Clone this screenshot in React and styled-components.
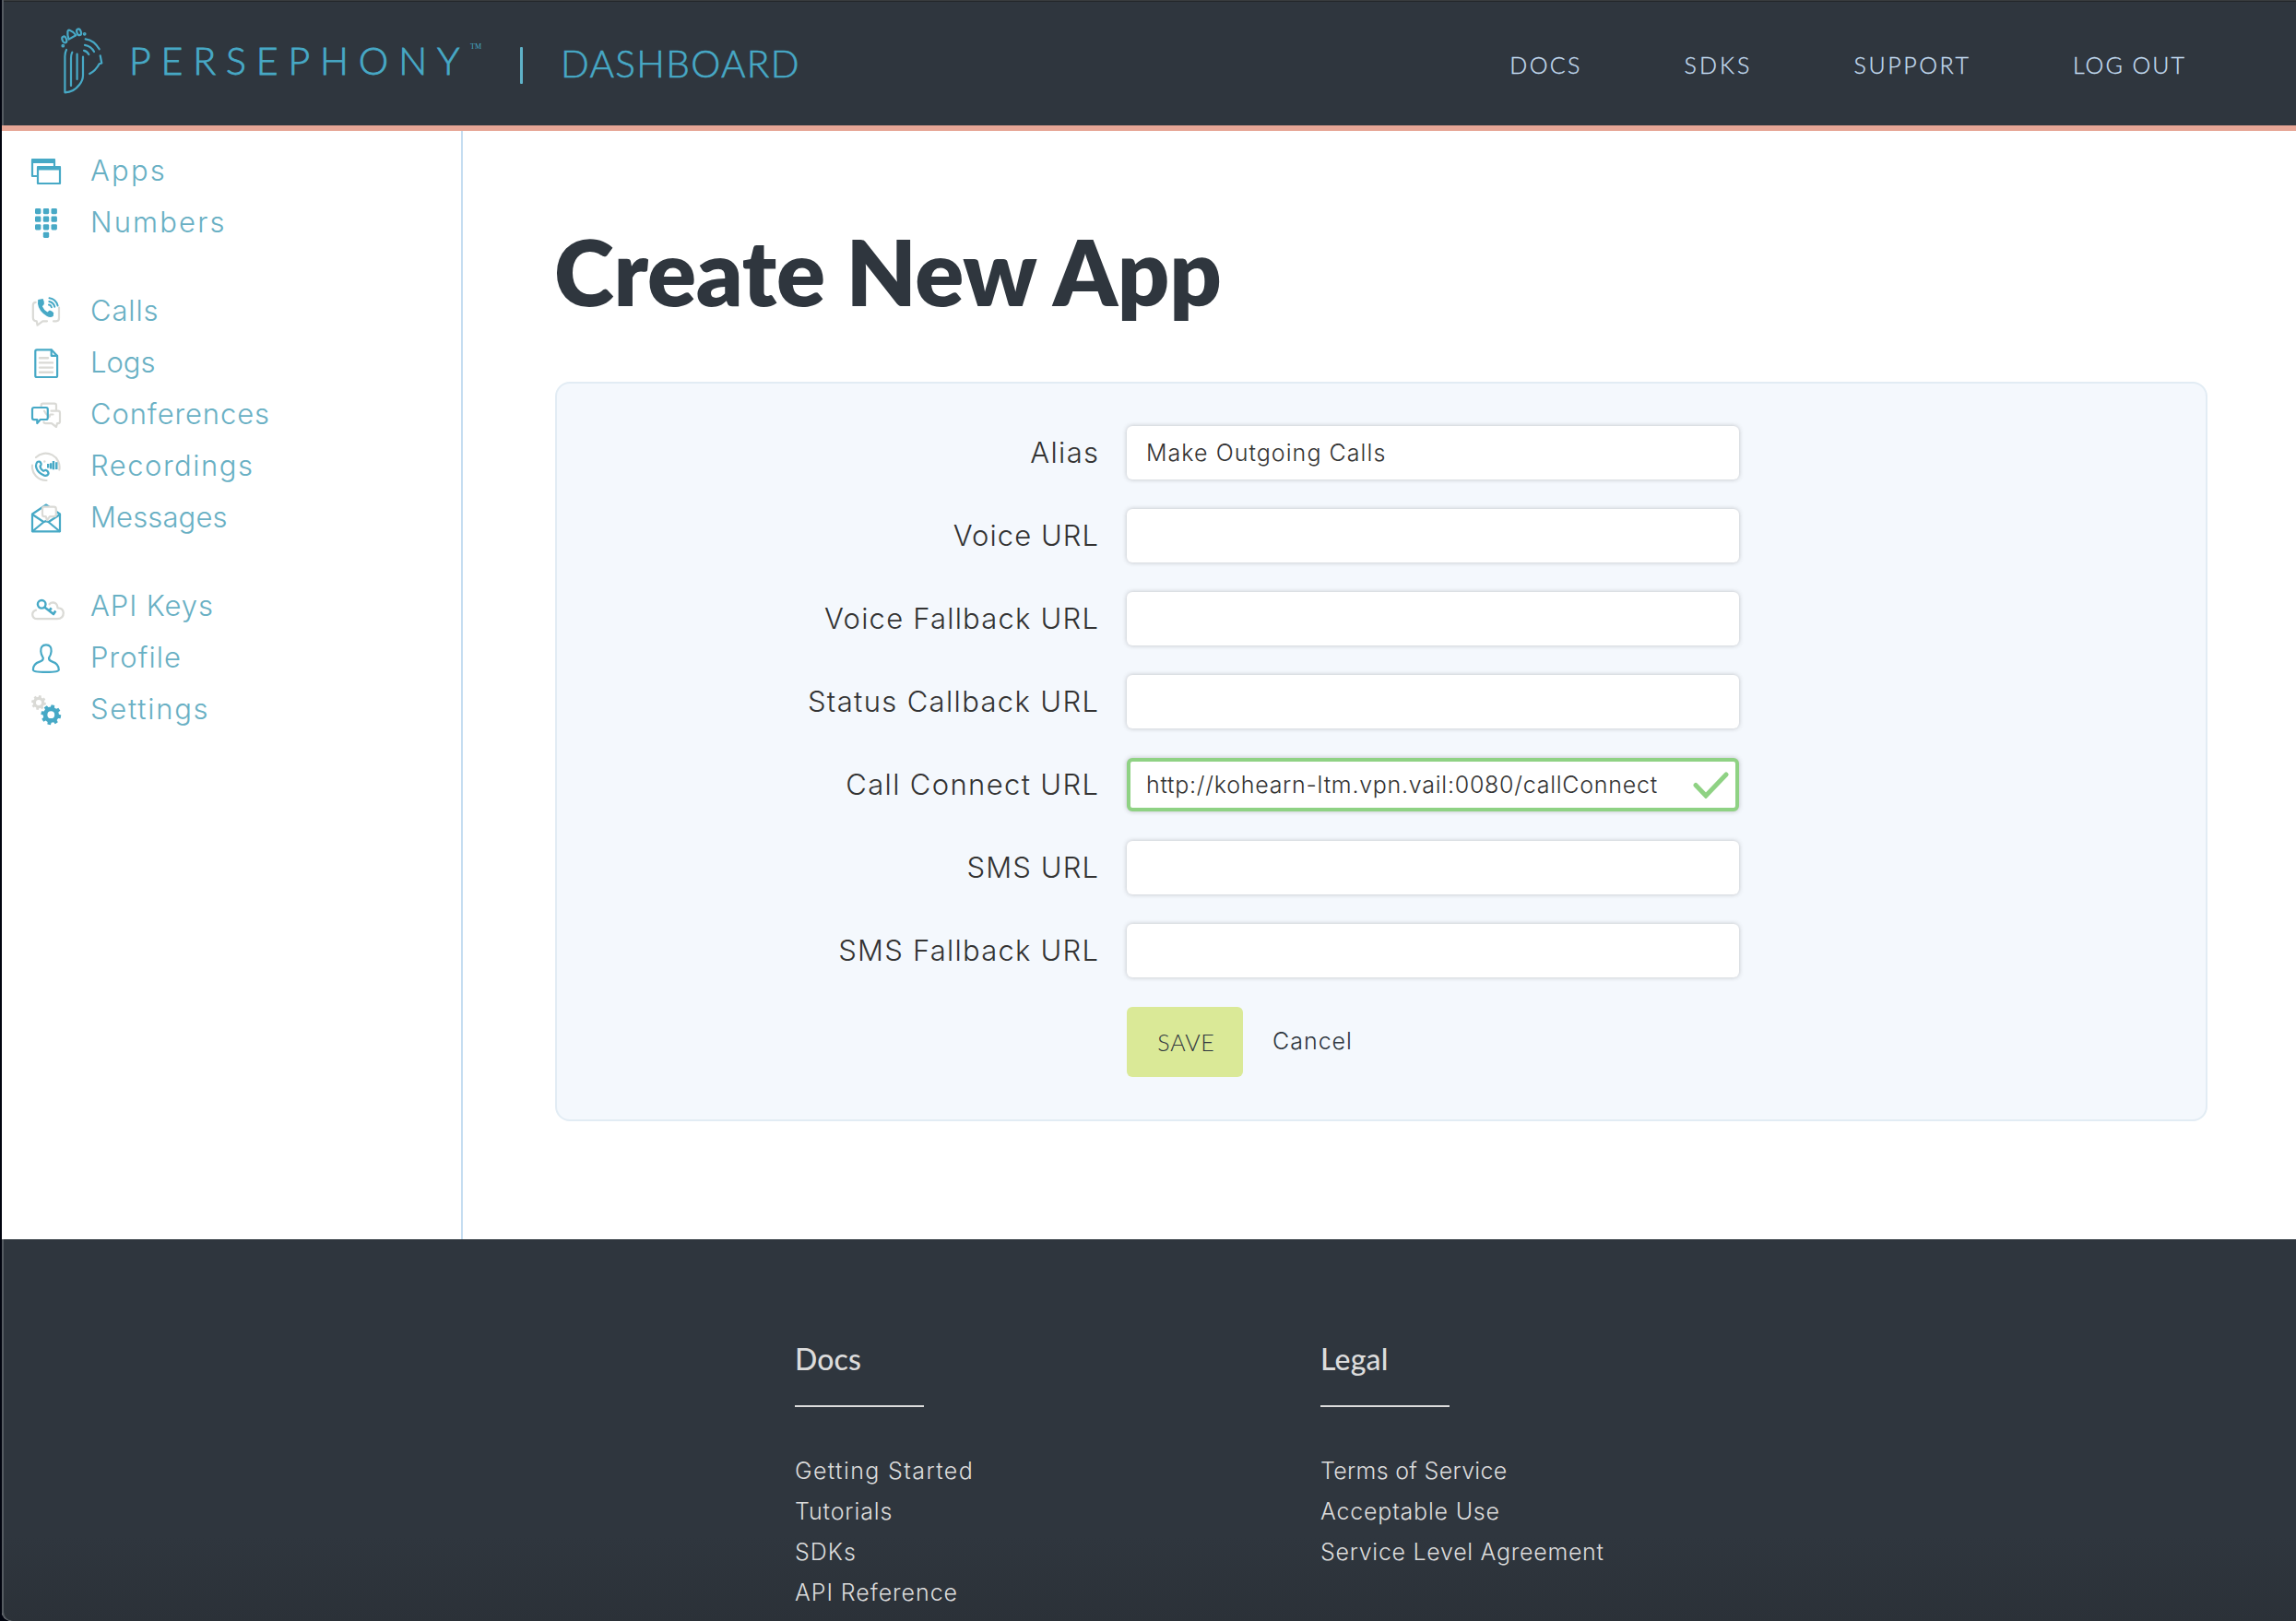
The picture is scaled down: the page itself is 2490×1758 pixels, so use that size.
import React from "react";
import styled, { createGlobalStyle } from "styled-components";

const color = {
  ink: "#2f363e",
  blue: "#47a9c6",
  link: "#69b0c4",
  grey: "#dadad6",
  pale: "#c5ddf1",
  coral: "#e6a696",
  text: "#333333",
  footer: "#dcdcdc",
  green: "#8fd284",
};
const body = `"Inter", "Noto Sans", sans-serif`;
const display = `"Lato", "Open Sans", sans-serif`;

const GlobalStyle = createGlobalStyle`
  *, *::before, *::after { box-sizing: border-box; }
  body { margin: 0; background: #01040f; font-family: ${body}; font-weight: 300; font-kerning: normal; }
  a { color: inherit; text-decoration: none; }
  ul { list-style: none; margin: 0; padding: 0; }
`;

const Window = styled.div`
  height: 1758px;
  margin-left: 2px;
  display: flex;
  flex-direction: column;
  overflow: hidden;
  background: #fff;
  border-bottom-left-radius: 10px;
`;

/* ---------- Header ---------- */

const Header = styled.header`
  flex: none;
  height: 142px;
  display: flex;
  justify-content: space-between;
  background: ${color.ink};
  border-bottom: 6px solid ${color.coral};
  box-shadow: inset 2px 0 0 #555b61, inset 0 1px 0 #393c3e, inset 0 2px 0 #24272a;
`;

const Brand = styled.a`
  display: flex;
  align-items: flex-start;
  padding-left: 62px;
  color: ${color.blue};
  font-family: ${display};
  font-weight: 300;
  -webkit-text-stroke: 0.8px currentColor;
`;

const Mark = styled.svg`
  width: 50px;
  height: 76px;
  margin-top: 28px;
  fill: none;
  stroke: ${color.blue};
  stroke-width: 2.2;
  stroke-linecap: round;
  stroke-linejoin: round;
`;

const Wordmark = styled.span`
  width: 370px;
  margin: 41px 0 0 26px;
  font-size: 41px;
  line-height: 49px;
  letter-spacing: 10.87px;
  white-space: nowrap;
`;

const Trade = styled.sup`
  width: 14px;
  margin: 46px 0 0 0;
  font: 400 8px/10px "Liberation Serif", serif;
  letter-spacing: 0;
  -webkit-text-stroke: 0;
`;

const Divider = styled.span`
  width: 3px;
  height: 40px;
  margin: 51px 0 0 40px;
  border-radius: 1px;
  background: #5fb2c8;
`;

const Section = styled.span`
  margin: 44px 0 0 41px;
  font-size: 40.5px;
  line-height: 49px;
  letter-spacing: 1.33px;
  -webkit-text-stroke: 0.6px currentColor;
`;

const TopNav = styled.nav`
  display: flex;
  gap: 113px;
  padding: 55px 121px 0 0;
  color: ${color.pale};
  font: 300 25px/30px ${display};
  -webkit-text-stroke: 0.3px currentColor;
`;

const TopLink = styled.a`
  letter-spacing: ${(p) => p.$track}px;
  margin-right: -${(p) => p.$track}px;
`;

/* ---------- Sidebar ---------- */

const Middle = styled.div`
  flex: none;
  height: 1202px;
  display: flex;
`;

const Sidebar = styled.aside`
  width: 500px;
  padding: 14px 0 0 32px;
  border-right: 2px solid ${color.pale};
`;

const Group = styled.ul`
  margin-bottom: 40px;
`;

const SideLink = styled.a`
  display: flex;
  gap: 32px;
  height: 56px;
  color: ${color.link};
  font-size: 31px;
  line-height: 37px;
  letter-spacing: ${(p) => p.$track}px;
`;

const SideText = styled.span`
  padding-top: 10px;
`;

const Icon = styled.svg`
  flex: none;
  width: 32px;
  height: 32px;
  margin-top: 14px;
  overflow: visible;
  fill: none;
  stroke: ${color.blue};
  stroke-width: 2.2;
  stroke-linecap: round;
  stroke-linejoin: round;
  .grey { stroke: ${color.grey}; }
  .solid { fill: ${color.blue}; stroke: none; }
  .greySolid { fill: ${color.grey}; stroke: none; }
`;

/* ---------- Form ---------- */

const Main = styled.main`
  flex: 1;
  padding: 93px 96px 0 100px;
`;

const Title = styled.h1`
  margin: 0 0 61px -1px;
  color: ${color.ink};
  font: 800 98.5px/118px ${display};
  letter-spacing: -0.18px;
`;

const Panel = styled.form`
  height: 802px;
  display: flex;
  flex-direction: column;
  gap: 32px;
  padding-top: 46px;
  background: #f4f8fd;
  border: 2px solid #e2ecf4;
  border-radius: 16px;
`;

const Row = styled.div`
  display: grid;
  grid-template-columns: 587px 664px;
  column-gap: 31px;
  height: 58px;
`;

const Label = styled.label`
  padding-top: 10px;
  text-align: right;
  color: ${color.text};
  font-size: 31px;
  line-height: 37px;
  letter-spacing: ${(p) => p.$track}px;
  margin-right: -${(p) => p.$track}px;
`;

const Control = styled.div`
  position: relative;
`;

const Input = styled.input`
  display: block;
  width: 664px;
  height: 58px;
  padding: 0 ${(p) => (p.$valid ? 60 : 20)}px 0 ${(p) => (p.$valid ? 17 : 21)}px;
  border: ${(p) => (p.$valid ? `4px solid ${color.green}` : "0")};
  border-radius: 6px;
  outline: 0;
  background: #fff;
  box-shadow: 0 0 5px rgba(60, 60, 60, 0.3);
  color: ${color.text};
  font: 300 25px/30px ${body};
  letter-spacing: ${(p) => p.$track || 0}px;
`;

const Check = styled.svg`
  position: absolute;
  right: 11px;
  top: 15px;
  width: 39px;
  height: 29px;
  fill: none;
  stroke: ${color.green};
  stroke-width: 5;
  stroke-linecap: round;
`;

const Actions = styled.div`
  display: flex;
  padding-left: 618px;
`;

const Save = styled.button`
  width: 126px;
  height: 76px;
  padding: 0 0 0 3px;
  border: 0;
  border-radius: 6px;
  background: #dae997;
  color: ${color.ink};
  font: 300 25px/30px ${display};
  letter-spacing: 0.79px;
`;

const Cancel = styled.a`
  margin: 22px 0 0 32px;
  color: ${color.ink};
  font-size: 25px;
  line-height: 30px;
  letter-spacing: 1px;
`;

/* ---------- Footer ---------- */

const Footer = styled.footer`
  flex: 1;
  display: grid;
  grid-template-columns: 570px 570px;
  padding: 110px 0 0 860px;
  background: linear-gradient(${color.ink} 78%, #2b3138);
  border-bottom-left-radius: 10px;
  box-shadow: inset 2px 0 0 #555b61;
  color: ${color.footer};
`;

const FootTitle = styled.h2`
  margin: 0;
  font: 500 32px/39px ${display};
  letter-spacing: 0.15px;
`;

const Rule = styled.hr`
  width: 140px;
  height: 2px;
  margin: 31px 0 47px;
  border: 0;
  background: ${color.footer};
`;

const FootLink = styled.a`
  display: block;
  font-size: 25px;
  line-height: 44px;
  letter-spacing: ${(p) => p.$track}px;
`;

/* ---------- Drawings ---------- */

function gear(cx, cy, outer, inner, hole, teeth, turn = 0) {
  const pts = [];
  for (let i = 0; i < teeth; i++) {
    const a = (i / teeth) * Math.PI * 2 + turn;
    const s = Math.PI / teeth;
    [[-0.62, inner], [-0.42, outer], [0.42, outer], [0.62, inner]].forEach(([k, r]) =>
      pts.push(`${(cx + Math.cos(a + k * s) * r).toFixed(2)} ${(cy + Math.sin(a + k * s) * r).toFixed(2)}`)
    );
  }
  return `M${pts.join("L")}Z M${cx - hole} ${cy}a${hole} ${hole} 0 1 0 ${hole * 2} 0a${hole} ${hole} 0 1 0 ${-hole * 2} 0Z`;
}

const icons = {
  apps: (
    <>
      <path d="M5.5 21H1V3.5H25V9.5" />
      <rect className="solid" x="0" y="2" width="26" height="5" rx="1" />
      <rect x="7" y="11.5" width="24" height="17.5" />
      <rect className="solid" x="6" y="10" width="26" height="4.5" rx="1" />
    </>
  ),
  numbers: [[4, 0], [12.8, 0], [21.5, 0], [4, 8.6], [12.8, 8.6], [21.5, 8.6], [4, 17.2], [12.8, 17.2], [21.5, 17.2], [12.8, 25.8]].map(
    ([x, y]) => <rect key={`${x}-${y}`} className="solid" x={x} y={y} width="6.4" height="6.2" rx="1.4" />
  ),
  calls: (
    <>
      <path className="grey" d="M4.7 5.8Q1.8 6 1.8 9V22.5Q1.8 26 5.7 26.3L6.6 30.7L12.3 26.3H17M30 11.5V23Q30 26.3 27 26.3H24" />
      <path className="solid" d="M7.2 3L12.6 2Q14.2 4.8 13.8 8L11.9 10.2Q13.5 14 17.4 16.6L19.8 14.5Q22.5 15 24.2 17.3L23.8 20.7Q21 23 17 21Q8 15.6 7 7.5Z" />
      <path strokeWidth="2" d="M19.5 1.3Q26.5 2.2 28.6 9.5M19.3 5Q24.2 6 25.3 10.8M19 8.6Q21.3 9 21.9 11.2" />
    </>
  ),
  logs: (
    <>
      <path d="M22 1.4H6Q4.3 1.4 4.3 3V29.5Q4.3 31 6 31H26.5Q28.1 31 28.1 29.5V8Z" />
      <path d="M21.7 1.6V7.8H28" />
      <path className="grey" strokeWidth="2.4" d="M9 10.2H18M9 15.4H23M9 20.6H23M9 25.7H23" />
    </>
  ),
  conferences: (
    <>
      <path className="grey" d="M10.7 6.5V5.5Q10.7 3.6 12.5 3.6H25Q27 3.6 27 5.5V10.500M21.5 11.7H29Q31 11.7 31 14V23Q31 25 29.2 25.2H28L27 29L22 25.2H15.5Q13.5 25.2 13.5 23.5M14 11.700L16 14.8L19.5 18L20.5 15.5H23.5" />
      <path d="M3 8H16Q17.8 8 17.8 10V19Q17.8 21 16 21H9.8L6.3 25V21.2H3Q1 21.2 1 19V10Q1 8 3 8Z" />
    </>
  ),
  recordings: (
    <>
      <path className="grey" d="M5 6A15 15 0 0 1 30.3 19.5M1 14.5A15 15 0 0 0 16.5 31" />
      <path d="M6.5 11Q9 9.5 10.5 12.5Q11 14.5 9.5 15.5Q9.5 18.5 13.2 20.8L15.5 19.8Q18.6 21 18.6 23.5Q17.5 26.5 14 25.6Q6 22.5 5 15.5Q4.9 12.5 6.5 11Z" />
      <path strokeWidth="2.4" strokeLinecap="butt" d="M18.2 13V17.5M21.2 12.2V18.6M24 10V19.3M27.3 11.2V19" />
      <circle className="greySolid" cx="14.3" cy="10.5" r="1.2" />
    </>
  ),
  messages: (
    <>
      <path d="M1 11.5V30.3H31V11.5L16 1.5Z" />
      <path d="M1.2 12L12.5 19.5M31 12L19.5 19.5M1.5 30L13 20.5Q16 18 19 20.5L30.5 30" />
      <path className="grey" fill="#fff" d="M14 3.7H24.5Q26.8 3.7 26.8 6V12Q26.8 14.2 24.5 14.2H20L17 18.2L15.8 14.2H14Q12 14.2 12 12V6Q12 3.7 14 3.7Z" />
    </>
  ),
  keys: (
    <>
      <path className="grey" strokeWidth="2.3" d="M5 19.6Q1.2 20.8 1.2 24.5Q1.5 29.2 6.5 29.2H28Q34.8 29 34.8 22.5Q34.3 17.3 28.6 17.3Q28 11.7 23.5 11.4Q21 11.4 19.6 13.2" />
      <circle cx="11.2" cy="13.3" r="4.3" strokeWidth="2.4" />
      <path strokeWidth="2.6" strokeLinecap="butt" d="M14.3 16.5L24 24L26.3 20.5M19.2 20.3L21.8 17.3" />
    </>
  ),
  profile: (
    <path d="M16 1.4C11.7 1.4 9.9 4.3 10.3 8.5C10.5 12 12 14 12.8 15.5C13 18 11.8 18.7 9 19.6C4 21.2 1.8 24 1.9 28.5C1.9 30 5 30.9 16 30.9C27 30.9 29.8 30 29.8 28.5C29.8 24 27.5 21.2 22.7 19.6C20 18.7 18.8 18 19 15.5C20 14 21.4 12 21.6 8.5C22 4.3 20.3 1.4 16 1.4Z" />
  ),
  settings: (
    <>
      <path className="greySolid" fillRule="evenodd" d={gear(8, 8, 8, 6.2, 3, 8, 0.2)} />
      <path className="solid" fillRule="evenodd" d={gear(21.3, 21.2, 11, 8.6, 3.9, 8, 0.2)} />
    </>
  ),
};

function Logo() {
  return (
    <Mark viewBox="0 0 50 76">
      <path d="M8 26Q6.6 28.5 6.4 33V72.3Q16 72 22 64Q26 59 26 53.7V33.7" />
      <path d="M14.3 28.7Q13 31 13 35V65M19.6 30.7V58" />
      <path d="M28.7 14.3Q38 15.5 43.7 25.3M28 20.8Q34.5 21.8 38 28M27 26.8Q30.5 27.5 32.3 31" />
      <path d="M44.7 32.3L46.3 40.5L43.7 41.3Q39.5 49 33.2 52" />
      <ellipse cx="5.8" cy="15" rx="2.2" ry="3.6" transform="rotate(-22 5.8 15)" />
      <path d="M10.6 14.6Q8.8 10 9.4 6Q10 4.3 11.5 4.8Q16 6.5 18.3 10.3Z" />
      <ellipse cx="21.6" cy="6.8" rx="2.2" ry="3.5" transform="rotate(-20 21.6 6.8)" />
      <circle cx="4.3" cy="21.7" r="0.8" />
      <circle cx="27.7" cy="8.8" r="0.8" />
    </Mark>
  );
}

/* ---------- Content ---------- */

const topLinks = [["DOCS", 2.34], ["SDKS", 3.12], ["SUPPORT", 2.57], ["LOG OUT", 2]];

const sideGroups = [
  [["Apps", "apps", 2.2], ["Numbers", "numbers", 2.15]],
  [["Calls", "calls", 0.86], ["Logs", "logs", 0], ["Conferences", "conferences", 0.88], ["Recordings", "recordings", 1.51], ["Messages", "messages", 0.14]],
  [["API Keys", "keys", 0.91], ["Profile", "profile", 1.06], ["Settings", "settings", 1.72]],
];

const fields = [
  { label: "Alias", track: 1.33, value: "Make Outgoing Calls", inputTrack: 1.05 },
  { label: "Voice URL", track: 1.05 },
  { label: "Voice Fallback URL", track: 1.21 },
  { label: "Status Callback URL", track: 1.35 },
  { label: "Call Connect URL", track: 1.35 },
  { label: "SMS URL", track: 1.1 },
  { label: "SMS Fallback URL", track: 1.23 },
];
Object.assign(fields[4], { value: "http://kohearn-ltm.vpn.vail:0080/callConnect", inputTrack: 0.74, valid: true });

const footerColumns = [
  { title: "Docs", links: [["Getting Started", 1.38], ["Tutorials", 0.88], ["SDKs", 1], ["API Reference", 0.93]] },
  { title: "Legal", links: [["Terms of Service", 0.3], ["Acceptable Use", 0.79], ["Service Level Agreement", 0.7]] },
];

export default function App() {
  return (
    <>
      <GlobalStyle />
      <Window>
        <Header>
          <Brand href="#">
            <Logo />
            <Wordmark>PERSEPHONY</Wordmark>
            <Trade>TM</Trade>
            <Divider />
            <Section>DASHBOARD</Section>
          </Brand>
          <TopNav>
            {topLinks.map(([name, track]) => (
              <TopLink key={name} href="#" $track={track}>{name}</TopLink>
            ))}
          </TopNav>
        </Header>
        <Middle>
          <Sidebar>
            {sideGroups.map((group) => (
              <Group key={group[0][0]}>
                {group.map(([name, icon, track]) => (
                  <li key={name}>
                    <SideLink href="#" $track={track}>
                      <Icon viewBox="0 0 32 32">{icons[icon]}</Icon>
                      <SideText>{name}</SideText>
                    </SideLink>
                  </li>
                ))}
              </Group>
            ))}
          </Sidebar>
          <Main>
            <Title>Create New App</Title>
            <Panel>
              {fields.map((f) => (
                <Row key={f.label}>
                  <Label $track={f.track}>{f.label}</Label>
                  <Control>
                    <Input type="text" defaultValue={f.value} $valid={f.valid} $track={f.inputTrack} spellCheck={false} />
                    {f.valid && (
                      <Check viewBox="0 0 39 29">
                        <path d="M3 14.5L14 26L36 3" />
                      </Check>
                    )}
                  </Control>
                </Row>
              ))}
              <Actions>
                <Save type="button">SAVE</Save>
                <Cancel href="#">Cancel</Cancel>
              </Actions>
            </Panel>
          </Main>
        </Middle>
        <Footer>
          {footerColumns.map((col) => (
            <section key={col.title}>
              <FootTitle>{col.title}</FootTitle>
              <Rule />
              {col.links.map(([name, track]) => (
                <FootLink key={name} href="#" $track={track}>{name}</FootLink>
              ))}
            </section>
          ))}
        </Footer>
      </Window>
    </>
  );
}
